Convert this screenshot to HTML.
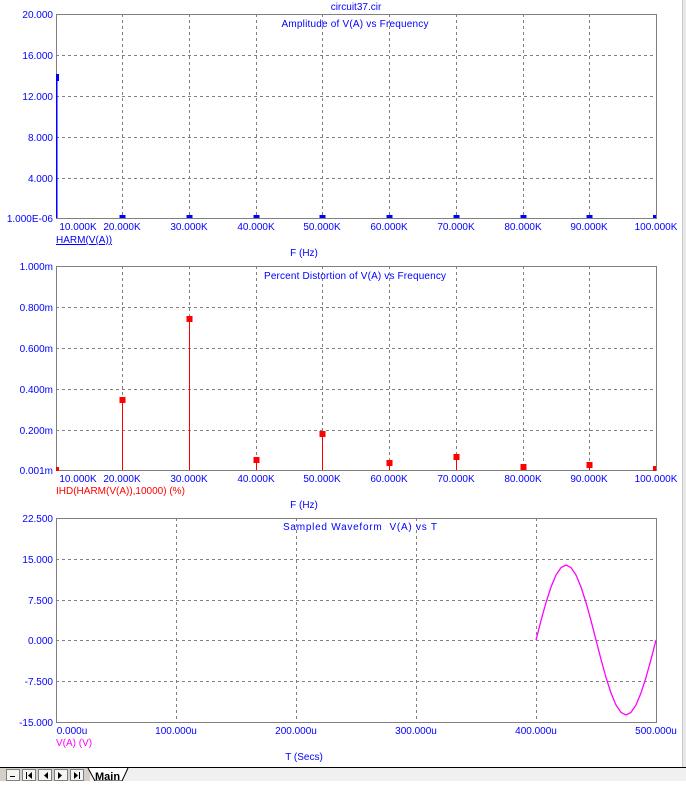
<!DOCTYPE html>
<html><head><style>
body{margin:0;width:686px;height:781px;overflow:hidden;background:#fff;font-family:"Liberation Sans",Arial,sans-serif}
svg text{font-family:"Liberation Sans",Arial,sans-serif;font-size:10px}
</style></head><body>
<svg width="686" height="781" xmlns="http://www.w3.org/2000/svg">
<rect x="682" y="0" width="4" height="767" fill="#e8e8e8"/>
<line x1="682.5" y1="0" x2="682.5" y2="767" stroke="#c8c8c8"/>
<text x="356" y="10" text-anchor="middle" fill="#0000ff">circuit37.cir</text>
<g stroke="#808080" stroke-dasharray="3,3" fill="none">
<path d="M122.5,14V218M189.5,14V218M256.5,14V218M322.5,14V218M389.5,14V218M456.5,14V218M523.5,14V218M589.5,14V218"/>
<path d="M56,55.5H656M56,96.5H656M56,137.5H656M56,178.5H656"/>
<path d="M122.5,266V470M189.5,266V470M256.5,266V470M322.5,266V470M389.5,266V470M456.5,266V470M523.5,266V470M589.5,266V470"/>
<path d="M56,307.5H656M56,348.5H656M56,389.5H656M56,430.5H656"/>
<path d="M176.5,518V722M296.5,518V722M416.5,518V722M536.5,518V722"/>
<path d="M56,559.5H656M56,600.5H656M56,640.5H656M56,681.5H656"/>
</g>
<g stroke="#808080" fill="none">
<rect x="56.5" y="14.5" width="600" height="204"/>
<rect x="56.5" y="266.5" width="600" height="204"/>
<rect x="56.5" y="518.5" width="600" height="204"/>
</g>
<g fill="#0000ff">
<text x="355" y="27" text-anchor="middle" textLength="147">Amplitude of V(A) vs Frequency</text>
<g text-anchor="end">
<text x="53" y="18">20.000</text><text x="53" y="59">16.000</text><text x="53" y="100">12.000</text>
<text x="53" y="141">8.000</text><text x="53" y="182">4.000</text><text x="53" y="222">1.000E-06</text>
<text x="53" y="270">1.000m</text><text x="53" y="311">0.800m</text><text x="53" y="352">0.600m</text>
<text x="53" y="393">0.400m</text><text x="53" y="434">0.200m</text><text x="53" y="474">0.001m</text>
<text x="53" y="522">22.500</text><text x="53" y="563">15.000</text><text x="53" y="604">7.500</text>
<text x="53" y="644">0.000</text><text x="53" y="685">-7.500</text><text x="53" y="726">-15.000</text>
</g>
<g text-anchor="middle">
<text x="78" y="230">10.000K</text><text x="122" y="230">20.000K</text><text x="189" y="230">30.000K</text><text x="256" y="230">40.000K</text><text x="322" y="230">50.000K</text><text x="389" y="230">60.000K</text><text x="456" y="230">70.000K</text><text x="523" y="230">80.000K</text><text x="589" y="230">90.000K</text><text x="656" y="230">100.000K</text>
<text x="78" y="482">10.000K</text><text x="122" y="482">20.000K</text><text x="189" y="482">30.000K</text><text x="256" y="482">40.000K</text><text x="322" y="482">50.000K</text><text x="389" y="482">60.000K</text><text x="456" y="482">70.000K</text><text x="523" y="482">80.000K</text><text x="589" y="482">90.000K</text><text x="656" y="482">100.000K</text>
<text x="72" y="734">0.000u</text><text x="176" y="734">100.000u</text><text x="296" y="734">200.000u</text><text x="416" y="734">300.000u</text><text x="536" y="734">400.000u</text><text x="656" y="734">500.000u</text>
<text x="304" y="256">F (Hz)</text><text x="304" y="508">F (Hz)</text><text x="304" y="760">T (Secs)</text>
</g>
<text x="56" y="243" text-decoration="underline">HARM(V(A))</text>
<text x="355" y="279" text-anchor="middle" textLength="182">Percent Distortion of V(A) vs Frequency</text>
<text x="360" y="530" text-anchor="middle" textLength="154" xml:space="preserve">Sampled Waveform  V(A) vs T</text>
<rect x="56" y="74" width="3" height="7"/>
<rect x="56" y="77" width="1.5" height="141"/>
<rect x="119.5" y="215" width="6" height="3"/><rect x="186.5" y="215" width="6" height="3"/><rect x="253.5" y="215" width="6" height="3"/><rect x="319.5" y="215" width="6" height="3"/><rect x="386.5" y="215" width="6" height="3"/><rect x="453.5" y="215" width="6" height="3"/><rect x="520.5" y="215" width="6" height="3"/><rect x="586.5" y="215" width="6" height="3"/><rect x="653" y="215" width="3" height="3"/>
</g>
<text x="56" y="494" fill="#ff0000">IHD(HARM(V(A)),10000) (%)</text>
<text x="56" y="746" fill="#ff00ff">V(A) (V)</text>
<g stroke="#ff0000" stroke-width="1">
<path d="M122.5,400V470M189.5,319V470M256.5,460V470M322.5,434V470M389.5,463V470M456.5,457V470M523.5,467V470M589.5,465V470"/>
</g>
<g fill="#ff0000">
<rect x="56" y="467" width="3" height="4"/>
<rect x="119.5" y="397" width="6" height="6"/><rect x="186.5" y="316" width="6" height="6"/><rect x="253.5" y="457" width="6" height="6"/><rect x="319.5" y="431" width="6" height="6"/><rect x="386.5" y="460" width="6" height="6"/><rect x="453.5" y="454" width="6" height="6"/><rect x="520.5" y="464" width="6" height="6"/><rect x="586.5" y="462" width="6" height="6"/><rect x="653" y="466" width="3" height="5"/>
</g>
<polyline fill="none" stroke="#ff00ff" stroke-width="1.3" points="536,640 541,620.6 546,602.5 551,587 556,575 561,567.6 566,565 571,567.6 576,575 581,587 586,602.5 591,620.6 596,640 601,659.4 606,677.5 611,693 616,705 621,712.4 626,715 631,712.4 636,705 641,693 646,677.5 651,659.4 656,640"/>
<rect x="0" y="767" width="686" height="14" fill="#f0f0f0"/>
<line x1="0" y1="767.5" x2="686" y2="767.5" stroke="#000"/>
<rect x="0" y="768" width="90" height="13" fill="#d4d0c8"/>
<g fill="#f4f4f4" stroke="#808080">
<rect x="6.5" y="769.5" width="13" height="11"/><rect x="22.5" y="769.5" width="13" height="11"/><rect x="38.5" y="769.5" width="13" height="11"/><rect x="54.5" y="769.5" width="13" height="11"/><rect x="70.5" y="769.5" width="13" height="11"/>
</g>
<g fill="#000">
<rect x="10" y="776" width="5" height="1"/>
<rect x="26" y="772" width="1" height="7"/><path d="M32,772V779L28,775.5Z"/>
<path d="M48,772V779L44,775.5Z"/>
<path d="M58,772V779L62,775.5Z"/>
<path d="M74,772V779L78,775.5Z"/><rect x="79" y="772" width="1" height="7"/>
</g>
<path d="M88,768L95,781H122L128,768" fill="#fff" stroke="#000"/>
<text x="95" y="780" font-weight="bold" fill="#000" style="font-size:11px">Main</text>
</svg>
</body></html>
